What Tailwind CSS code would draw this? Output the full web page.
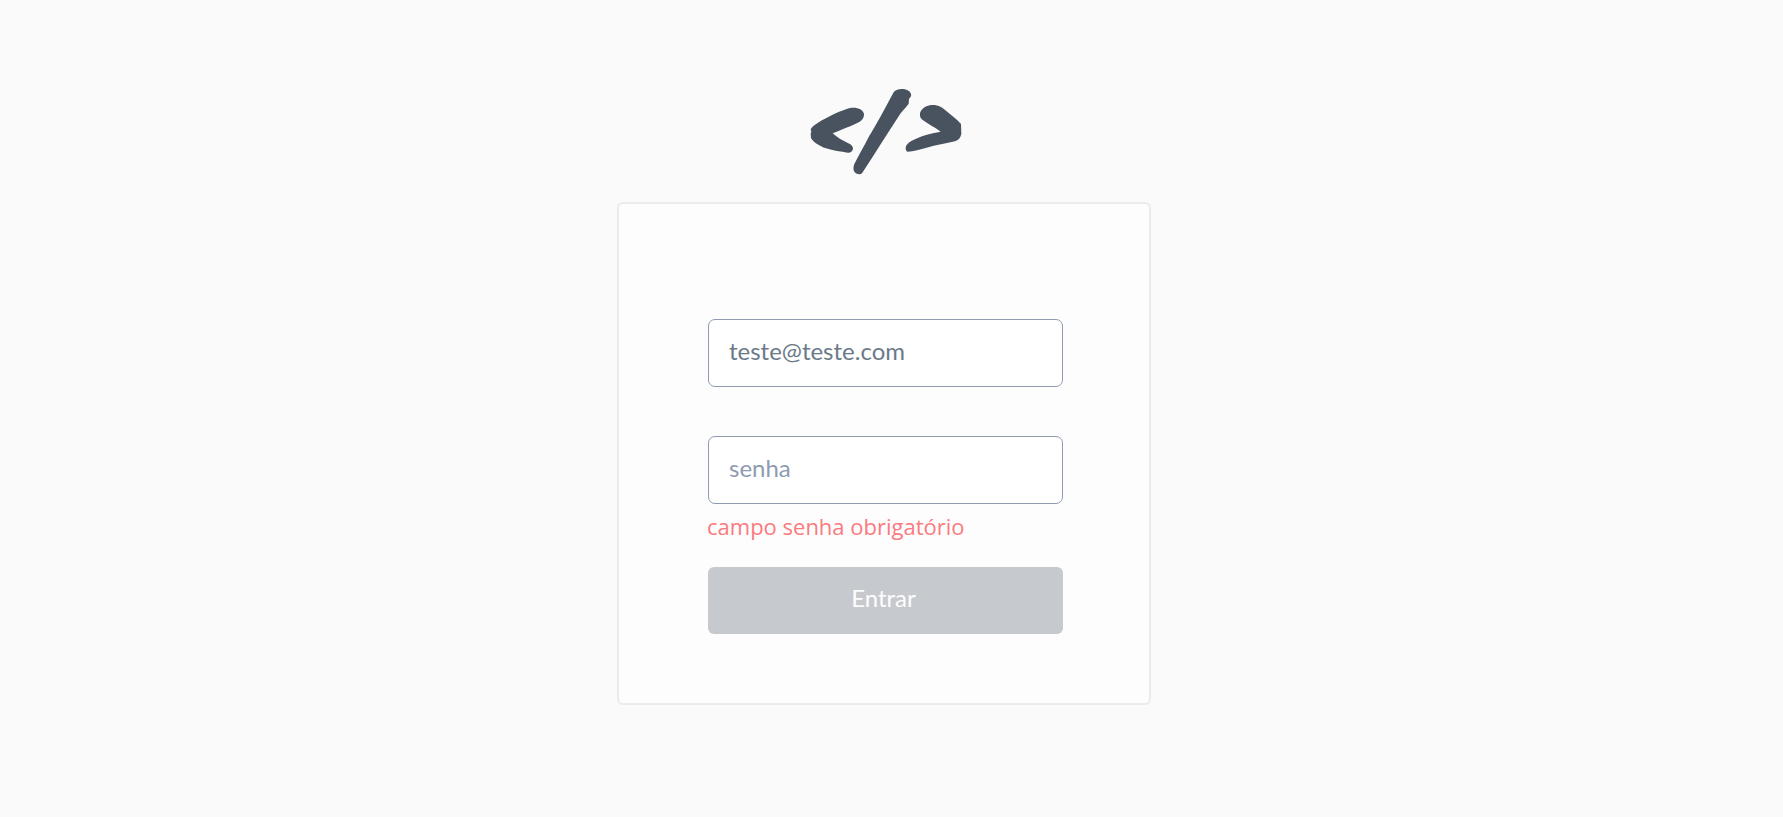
<!DOCTYPE html>
<html lang="pt-BR">
<head>
<meta charset="utf-8">
<meta name="viewport" content="width=device-width, initial-scale=1">
<title>Entrar</title>
<script src="https://cdn.jsdelivr.net/npm/@tailwindcss/browser@4"></script>
</head>
<body class="min-h-screen bg-[#fafafa] font-['Lato',sans-serif]">
<main class="flex flex-col items-center pt-20 pr-[15px] pb-20">
  <svg class="ml-[2px] w-[170px]" viewBox="0 0 510 300" fill="#49535f" role="img" aria-label="Código">
    <path d="M32 148C36 140 45 134 54 128C80 112 125 90 150 84C170 80 188 87 192 101C193 111 188 119 179 125C157 137 125 148 98 160C110 172 128 182 145 190C154 194 160 200 159 207C157 215 151 219 143 218C123 215 99 212 78 205C58 198 39 186 33 174L32 159L34 156Z"/>
    <path d="M280 38C287 25 311 24 323 31C332 36 335 43 333 49L327 57L326 71C318 82 308 91 300 103C262 161 226 219 187 278C182 285 171 284 164 277C159 270 160 262 162 254C176 226 192 199 206 171C232 127 256 84 280 38Z"/>
    <path d="M317 203C317 196 324 189 334 183C358 169 391 160 422 155C405 142 384 131 367 119C359 113 359 104 361 96C368 80 387 73 404 75C418 76 429 84 438 92C453 106 471 117 483 132L484 162C482 173 475 181 465 184C439 190 407 195 380 203C362 208 340 214 323 215C318 214 317 208 317 203Z"/>
  </svg>
  <form class="mt-[22px] flex w-full max-w-[534px] flex-col rounded-md border-2 border-[#ebebeb] bg-[#fdfdfd] pt-[115px] pr-[86px] pb-[69px] pl-[89px]">
    <input type="email" aria-label="e-mail" value="teste@teste.com" class="h-[68px] w-full rounded-[7px] border border-[#8e9bb1] bg-white px-5 pb-[6px] text-2xl text-[#6b7a88] outline-none">
    <input type="password" aria-label="senha" placeholder="senha" aria-describedby="erro-senha" class="mt-[49px] h-[68px] w-full rounded-[7px] border border-[#8e9bb1] bg-white px-5 pb-[6px] text-2xl text-[#6b7a88] outline-none placeholder:text-[#8e9bb1]">
    <p id="erro-senha" class="-ml-px mt-[6px] h-8 font-['Open_Sans',sans-serif] text-[22px] leading-8 text-[#fb7a7e]">campo senha obrigatório</p>
    <button type="submit" disabled class="mt-[25px] h-[67px] w-full rounded-md bg-[#c6c9ce] pr-1 pb-[6px] text-2xl text-[#fdfdfd]">Entrar</button>
  </form>
</main>
</body>
</html>
